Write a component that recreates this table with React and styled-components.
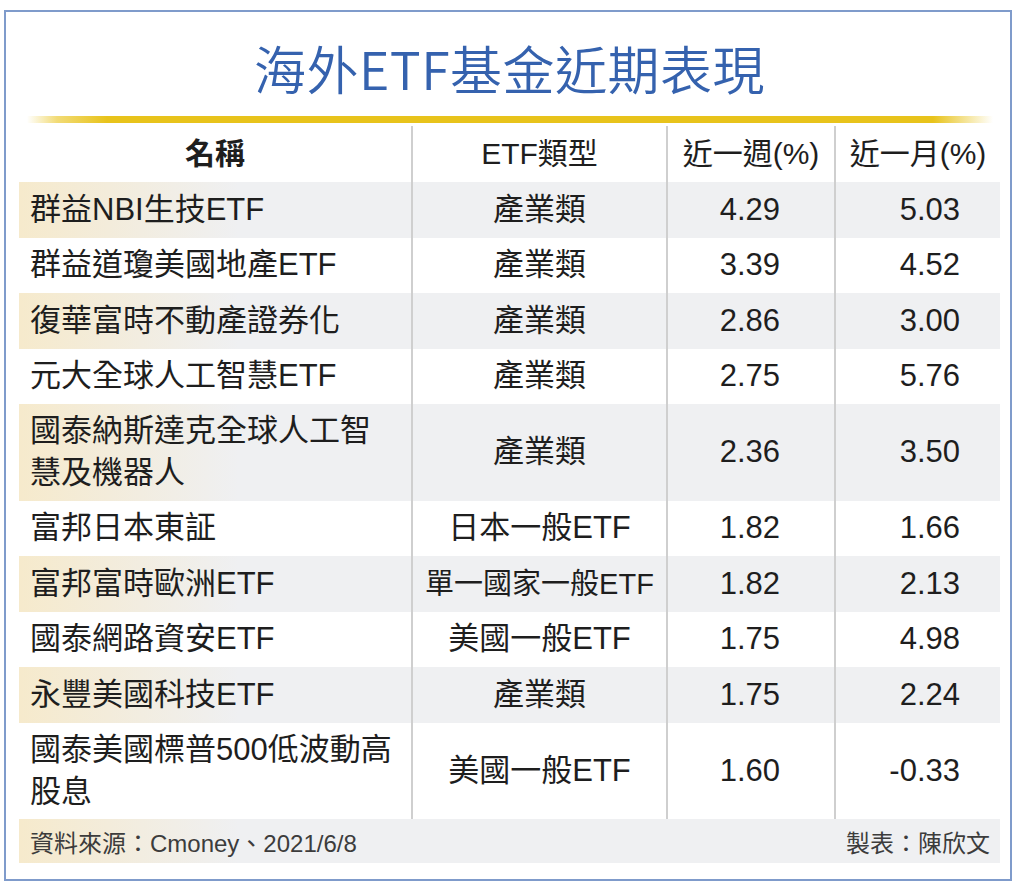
import React from "react";
import styled, { createGlobalStyle } from "styled-components";

const Global = createGlobalStyle`
  html, body { margin: 0; padding: 0; background: #ffffff; }
  body {
    font-family: "Liberation Sans", "Noto Sans CJK TC", sans-serif;
    color: #222;
  }
`;

const Frame = styled.div`
  box-sizing: border-box;
  margin: 10px 0 0 4px;
  width: 1008px;
  height: 871px;
  border: 2px solid #7f9bcb;
  padding: 0 10px 0 13px;
  display: flex;
  flex-direction: column;
`;

const Title = styled.h1`
  margin: 0;
  height: 104px;
  padding-top: 6px;
  box-sizing: border-box;
  display: flex;
  align-items: center;
  justify-content: center;
  font-family: "Noto Sans CJK TC", sans-serif;
  font-weight: 350;
  font-size: 52px;
  color: #3562ae;
  letter-spacing: 0.5px;
`;

const GoldRule = styled.div`
  height: 7px;
  margin: 0 7px 3px 8px;
  background: linear-gradient(
    to right,
    rgba(233, 195, 27, 0) 0,
    rgba(233, 195, 27, 0.6) 30px,
    #e8c31b 80px,
    #e8c31b calc(100% - 60px),
    rgba(233, 195, 27, 0) 100%
  );
`;

const Row = styled.div`
  display: grid;
  grid-template-columns: 392px 255px 168px 166px;
  height: ${(p) => p.$h}px;
  background: ${(p) =>
    p.$shaded
      ? "linear-gradient(to right, #f6eacc 0, #f3ecdb 90px, #eff0f2 220px, #eff0f2 100%)"
      : "#ffffff"};
`;

const Cell = styled.div`
  display: flex;
  flex-direction: column;
  justify-content: center;
  box-sizing: border-box;
  font-size: ${(p) => (p.$head ? 30 : 31)}px;
  font-weight: ${(p) => (p.$bold ? 700 : 400)};
  line-height: 42px;
  color: #1e1e1e;
  white-space: nowrap;
  ${(p) => (p.$divider ? "border-left: 2px solid #cfcfcf;" : "")}
  align-items: ${(p) =>
    p.$align === "left" ? "flex-start" : p.$align === "right" ? "flex-end" : "center"};
  padding-left: ${(p) => p.$pl || 0}px;
  padding-right: ${(p) => p.$pr || 0}px;
`;

const Footer = styled.div`
  height: 44px;
  display: flex;
  align-items: center;
  justify-content: space-between;
  padding: 0 10px 0 11px;
  background: linear-gradient(to right, #f6eacc 0, #f3ecdb 90px, #eff0f2 220px, #eff0f2 100%);
  font-size: 24px;
  color: #3c3c3c;
`;

const rows = [
  { name: ["群益NBI生技ETF"], type: "產業類", w: "4.29", m: "5.03" },
  { name: ["群益道瓊美國地產ETF"], type: "產業類", w: "3.39", m: "4.52" },
  { name: ["復華富時不動產證券化"], type: "產業類", w: "2.86", m: "3.00" },
  { name: ["元大全球人工智慧ETF"], type: "產業類", w: "2.75", m: "5.76" },
  { name: ["國泰納斯達克全球人工智", "慧及機器人"], type: "產業類", w: "2.36", m: "3.50" },
  { name: ["富邦日本東証"], type: "日本一般ETF", w: "1.82", m: "1.66" },
  { name: ["富邦富時歐洲ETF"], type: "單一國家一般ETF", w: "1.82", m: "2.13" },
  { name: ["國泰網路資安ETF"], type: "美國一般ETF", w: "1.75", m: "4.98" },
  { name: ["永豐美國科技ETF"], type: "產業類", w: "1.75", m: "2.24" },
  { name: ["國泰美國標普500低波動高", "股息"], type: "美國一般ETF", w: "1.60", m: "-0.33" },
];

const TypeText = styled.span`
  font-size: ${(p) => (p.$small ? 29 : 31)}px;
`;

export default function App() {
  return (
    <>
      <Global />
      <Frame>
        <Title>海外ETF基金近期表現</Title>
        <GoldRule />
        <Row $h={56}>
          <Cell $head $bold>名稱</Cell>
          <Cell $head $divider>ETF類型</Cell>
          <Cell $head $divider>近一週(%)</Cell>
          <Cell $head $divider>近一月(%)</Cell>
        </Row>
        {rows.map((r, i) => (
          <Row key={i} $shaded={i % 2 === 0} $h={r.name.length > 1 ? 96.5 : 55.5}>
            <Cell $align="left" $pl={11}>
              {r.name.map((l, j) => (
                <span key={j}>{l}</span>
              ))}
            </Cell>
            <Cell $divider>
              <TypeText $small={r.type.length > 7}>{r.type}</TypeText>
            </Cell>
            <Cell $divider $align="right" $pr={54}>{r.w}</Cell>
            <Cell $divider $align="right" $pr={40}>{r.m}</Cell>
          </Row>
        ))}
        <Footer>
          <span>資料來源：Cmoney、2021/6/8</span>
          <span>製表：陳欣文</span>
        </Footer>
      </Frame>
    </>
  );
}
